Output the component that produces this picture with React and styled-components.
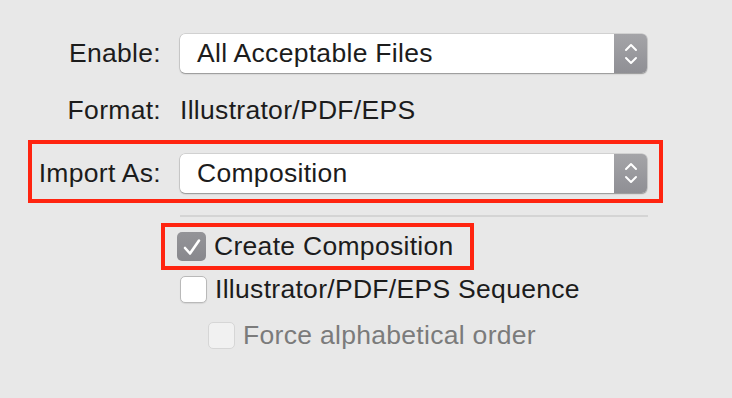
import React from "react";
import styled, { createGlobalStyle } from "styled-components";

const GlobalStyle = createGlobalStyle`
  body {
    margin: 0;
    background: #e8e8e8;
    font-family: "Liberation Sans", Arial, sans-serif;
    color: #1c1c1c;
  }
`;

const Panel = styled.div`
  width: 732px;
  height: 398px;
  padding-top: 34px;
  box-sizing: border-box;
  display: flex;
  flex-direction: column;
  font-size: 26.5px;
  letter-spacing: 0.3px;
`;

const Row = styled.div`
  display: flex;
  align-items: center;
  gap: 19px;
  height: 39px;
  margin-top: ${(p) => p.$top || 0}px;
`;

const Label = styled.div`
  width: ${(p) => p.$width || 161}px;
  text-align: right;
  white-space: nowrap;
`;

const Value = styled.div`
  white-space: nowrap;
`;

const Highlight = styled.div`
  border: 4px solid #ff2410;
  box-sizing: border-box;
`;

const ImportBox = styled(Highlight)`
  margin: 10px 0 0 28px;
  width: 635px;
  height: 63px;
  padding-top: 3px;
  display: flex;
  align-items: center;
  gap: 19px;
`;

const PopupBox = styled.div`
  width: 467px;
  height: 39px;
  display: flex;
  background: #fff;
  border-radius: 5px;
  box-shadow: 0 0 0 0.5px rgba(0, 0, 0, 0.18), 0 1px 1.5px rgba(0, 0, 0, 0.3);
  overflow: hidden;
`;

const PopupText = styled.div`
  flex: 1;
  display: flex;
  align-items: center;
  padding-left: 17px;
  white-space: nowrap;
`;

const Stepper = styled.div`
  width: 33px;
  display: flex;
  align-items: center;
  justify-content: center;
  background: linear-gradient(#a4a4a8, #8f8f94);
`;

const Separator = styled.div`
  margin: 12px 0 0 180px;
  width: 468px;
  height: 2px;
  background: #d4d4d4;
`;

const CheckBoxHighlight = styled(Highlight)`
  margin: 6px 0 0 161px;
  width: 313px;
  height: 47px;
  padding-left: 12px;
  display: flex;
  align-items: center;
`;

const CheckRow = styled.label`
  display: flex;
  align-items: center;
  gap: 8px;
  height: 28px;
  margin: ${(p) => p.$top || 0}px 0 0 ${(p) => p.$left || 0}px;
  color: ${(p) => (p.$disabled ? "#7b7b7b" : "#1c1c1c")};
  white-space: nowrap;
`;

const Box = styled.span`
  width: ${(p) => (p.$checked ? 29 : 27)}px;
  height: ${(p) => (p.$checked ? 29 : 27)}px;
  box-sizing: border-box;
  border-radius: 5px;
  display: flex;
  align-items: center;
  justify-content: center;
  flex-shrink: 0;
  ${(p) =>
    p.$checked
      ? `background: linear-gradient(#949498, #88888d);`
      : p.$disabled
      ? `background: #f1f1f1; border: 1px solid #d6d6d6;`
      : `background: #fff; border: 1px solid #b9b9b9; box-shadow: 0 1px 1px rgba(0,0,0,0.08);`}
`;

const Chevrons = () => (
  <svg width="14" height="24" viewBox="0 0 14 24" fill="none">
    <path d="M2 8 L7 3 L12 8" stroke="#fff" strokeWidth="2" strokeLinecap="round" strokeLinejoin="round" />
    <path d="M2 16 L7 21 L12 16" stroke="#fff" strokeWidth="2" strokeLinecap="round" strokeLinejoin="round" />
  </svg>
);

const Popup = ({ children }) => (
  <PopupBox>
    <PopupText>{children}</PopupText>
    <Stepper>
      <Chevrons />
    </Stepper>
  </PopupBox>
);

const Check = ({ checked, disabled }) => (
  <Box $checked={checked} $disabled={disabled}>
    {checked && (
      <svg width="20" height="18" viewBox="0 0 20 18" fill="none">
        <path d="M3 10 L8 15.5 L17 2.5" stroke="#fff" strokeWidth="2.6" strokeLinecap="round" strokeLinejoin="round" />
      </svg>
    )}
  </Box>
);

export default function App() {
  return (
    <>
      <GlobalStyle />
      <Panel>
        <Row>
          <Label>Enable:</Label>
          <Popup>All Acceptable Files</Popup>
        </Row>
        <Row $top={18}>
          <Label>Format:</Label>
          <Value>Illustrator/PDF/EPS</Value>
        </Row>
        <ImportBox>
          <Label $width={129}>Import As:</Label>
          <Popup>Composition</Popup>
        </ImportBox>
        <Separator />
        <CheckBoxHighlight>
          <CheckRow>
            <Check checked />
            Create Composition
          </CheckRow>
        </CheckBoxHighlight>
        <CheckRow $top={5} $left={180}>
          <Check />
          Illustrator/PDF/EPS Sequence
        </CheckRow>
        <CheckRow $top={18} $left={208} $disabled>
          <Check disabled />
          Force alphabetical order
        </CheckRow>
      </Panel>
    </>
  );
}
